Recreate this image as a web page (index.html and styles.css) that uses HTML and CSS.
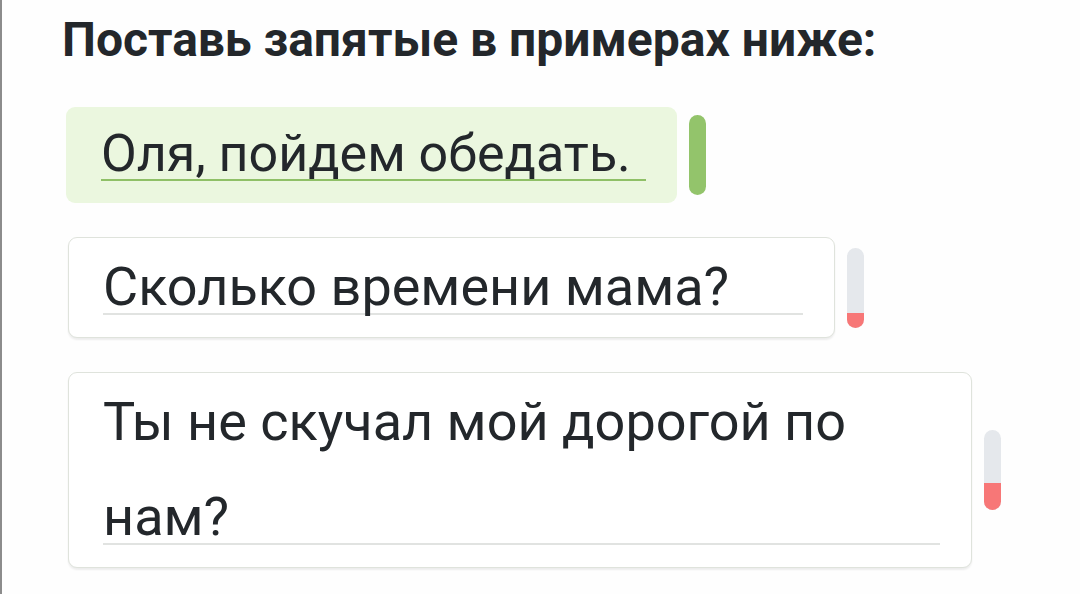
FILE: index.html
```html
<!DOCTYPE html>
<html lang="ru">
<head>
<meta charset="utf-8">
<link rel="stylesheet" href="styles.css">
</head>
<body>
<div class="page">
  <h1 class="title">Поставь запятые в примерах ниже:</h1>
  <div class="list">
    <div class="row">
      <div class="card card--done">
        <div class="field field--done" style="width:545px"><div class="text">Оля, пойдем обедать.</div></div>
      </div>
      <div class="meter meter--done"><div class="meter__fill" style="height:100%"></div></div>
    </div>
    <div class="row">
      <div class="card">
        <div class="field" style="width:700px"><div class="text">Сколько времени мама?</div></div>
      </div>
      <div class="meter"><div class="meter__fill" style="height:18%"></div></div>
    </div>
    <div class="row">
      <div class="card">
        <div class="field" style="width:837px"><div class="text">Ты не скучал мой дорогой по нам?</div></div>
      </div>
      <div class="meter"><div class="meter__fill" style="height:34%"></div></div>
    </div>
  </div>
</div>
</body>
</html>
```
FILE: styles.css
```css
html, body {
  margin: 0;
  padding: 0;
  background: #fefefe;
}
body {
  width: 1080px;
  height: 594px;
  overflow: hidden;
  font-family: Roboto, "Noto Sans", sans-serif;
  color: #23272b;
}
.page {
  height: 594px;
  box-sizing: border-box;
  border-left: 2px solid #8c8c8c;
  padding: 12px 0 0 60px;
}
.title {
  margin: 0;
  font-size: 48px;
  font-weight: 700;
  line-height: 56px;
  color: #23272b;
}
.list {
  display: flex;
  flex-direction: column;
  gap: 34px;
  margin: 39px 0 0 4px;
}
.row {
  display: flex;
  align-items: center;
  gap: 12px;
}
.card {
  margin-left: 2px;
  background: #ffffff;
  border: 1px solid #dfe3dc;
  border-radius: 9px;
  box-shadow: 0 2px 2px rgba(0, 0, 0, 0.07);
  padding: 1px 31px 22px 34px;
}
.card--done {
  margin-left: 0;
  background: #ebf7df;
  border: none;
  box-shadow: none;
  padding: 0 31px 22px 35px;
}
.field {
  border-bottom: 2px solid #e1e3e1;
}
.field--done {
  border-bottom-color: #8fc067;
}
.text {
  font-size: 54px;
  line-height: 95px;
  margin-bottom: -21px;
  color: #23272b;
}
.field--done .text {
  font-size: 52px;
  line-height: 93px;
  margin-bottom: -21px;
}
.meter {
  width: 17px;
  height: 80px;
  border-radius: 9px;
  background: #e5e8ec;
  overflow: hidden;
  display: flex;
  flex-direction: column;
  justify-content: flex-end;
}
.meter__fill {
  background: #f77777;
}
.meter--done .meter__fill {
  background: #93c46b;
}
```
